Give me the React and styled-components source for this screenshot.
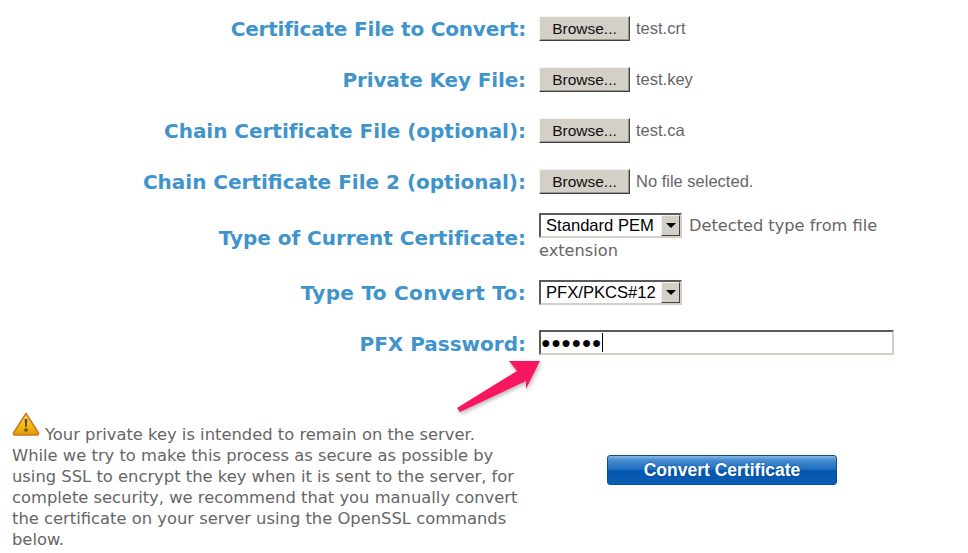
import React from "react";
import styled, { createGlobalStyle } from "styled-components";

const Global = createGlobalStyle`
  html, body { margin: 0; padding: 0; background: #fff; overflow: hidden; }
`;

const Page = styled.div`
  position: relative;
  width: 968px;
  height: 553px;
  overflow: hidden;
  padding-top: 16px;
  box-sizing: border-box;
`;

const Form = styled.div`
  display: flex;
  flex-direction: column;
`;

const Row = styled.div`
  display: grid;
  grid-template-columns: 526px 356px;
  column-gap: 13px;
  align-items: center;
  height: ${(p) => p.$h}px;
  margin-top: ${(p) => p.$mt || 0}px;
  margin-bottom: ${(p) => p.$mb}px;
`;

const Label = styled.div`
  font: bold 20px/${(p) => p.$lh || 25}px "DejaVu Sans", Verdana, sans-serif;
  height: 25px;
  color: #3f94cc;
  text-align: right;
  white-space: nowrap;
  letter-spacing: ${(p) => p.$ls || 0}px;
`;

const FileCell = styled.div`
  display: flex;
  align-items: center;
  gap: 6px;
`;

const BrowseButton = styled.button`
  width: 91px;
  height: 25px;
  padding: 0;
  box-sizing: border-box;
  background: #d4d0c8;
  border: 1px solid;
  border-color: #f4f3ef #404040 #404040 #f4f3ef;
  box-shadow: inset -1px -1px 0 #9a978f;
  font: 15.500px "Liberation Sans", Arial, sans-serif;
  color: #111;
`;

const FileName = styled.span`
  font: 16.500px "Liberation Sans", Arial, sans-serif;
  color: #666;
`;

const SelectBox = styled.span`
  display: inline-flex;
  align-items: center;
  justify-content: space-between;
  vertical-align: top;
  width: 143px;
  height: 25px;
  box-sizing: border-box;
  background: #fff;
  border: 2px solid;
  border-color: #5a5a5a #d4d0c8 #d4d0c8 #5a5a5a;
  padding: 0 0 0 5px;
  margin-top: ${(p) => p.$mt || 0}px;
  font: 16.600px/21px "Liberation Sans", Arial, sans-serif;
  color: #000;
`;

const SelectArrow = styled.span`
  display: flex;
  align-items: center;
  justify-content: center;
  width: 19px;
  height: 21px;
  box-sizing: border-box;
  background: #d4d0c8;
  border: 1px solid;
  border-color: #f4f3ef #404040 #404040 #f4f3ef;
  &::after {
    content: "";
    border-style: solid;
    border-width: 5px 5px 0 5px;
    border-color: #000 transparent transparent transparent;
  }
`;

const Hint = styled.div`
  font: 16.200px/25px "DejaVu Sans", Verdana, sans-serif;
  color: #666;
  align-self: start;
  & > span:last-child { margin-left: 7px; }
`;

const PasswordBox = styled.div`
  width: 355px;
  height: 25px;
  margin-top: -4px;
  box-sizing: border-box;
  background: #fff;
  border: 2px solid;
  border-color: #5a5a5a #d4d0c8 #d4d0c8 #5a5a5a;
  display: flex;
  align-items: center;
`;

const Dots = styled.span`
  font: 16px/19px "Liberation Sans", Arial, sans-serif;
  letter-spacing: 0.5px;
  color: #000;
  border-right: 1px solid #000;
  height: 19px;
  display: inline-block;
`;

const Bottom = styled.div`
  display: grid;
  grid-template-columns: 520px 230px;
  column-gap: 75px;
  padding-left: 12px;
  margin-top: 55px;
  align-items: start;
`;

const Warning = styled.p`
  margin: 0;
  font: 16.350px/21px "DejaVu Sans", Verdana, sans-serif;
  color: #666;
  white-space: nowrap;
`;

const WarnIcon = styled.svg`
  width: 28px;
  height: 24px;
  vertical-align: 4px;
  margin-right: 5px;
`;

const Convert = styled.button`
  width: 230px;
  height: 30px;
  margin-top: 43px;
  padding: 0;
  border: 1px solid #0b4f8f;
  border-radius: 3px;
  background: linear-gradient(#8ab6e2 0%, #4a8ed2 14%, #1c6cbf 48%, #0458ae 52%, #0a5db2 100%);
  color: #fff;
  font: bold 17.500px "Liberation Sans", Arial, sans-serif;
  text-shadow: 0 0 2px #0a4a8c;
`;

const ArrowOverlay = styled.svg`
  position: absolute;
  left: 440px;
  top: 345px;
  width: 120px;
  height: 80px;
  overflow: visible;
`;

const fileRows = [
  ["Certificate File to Convert:", "test.crt", -0.18],
  ["Private Key File:", "test.key", -0.12],
  ["Chain Certificate File (optional):", "test.ca", -0.03],
  ["Chain Certificate File 2 (optional):", "No file selected.", 0],
];

export default function App() {
  return (
    <Page>
      <Global />
      <Form>
        {fileRows.map(([label, file, ls]) => (
          <Row key={label} $h={25} $mb={26}>
            <Label $ls={ls} $lh={27}>{label}</Label>
            <FileCell>
              <BrowseButton>Browse...</BrowseButton>
              <FileName>{file}</FileName>
            </FileCell>
          </Row>
        ))}
        <Row $h={48} $mt={-7} $mb={20}>
          <Label $ls={-0.03}>Type of Current Certificate:</Label>
          <Hint>
            <SelectBox>
              Standard PEM
              <SelectArrow />
            </SelectBox>
            <span>Detected type from file extension</span>
          </Hint>
        </Row>
        <Row $h={25} $mb={26}>
          <Label $ls={0.32}>Type To Convert To:</Label>
          <div>
            <SelectBox $mt={-2}>
              PFX/PKCS#12
              <SelectArrow />
            </SelectBox>
          </div>
        </Row>
        <Row $h={25} $mb={0}>
          <Label>PFX Password:</Label>
          <PasswordBox>
            <Dots>●●●●●●</Dots>
          </PasswordBox>
        </Row>
      </Form>
      <Bottom>
        <Warning>
          <WarnIcon viewBox="0 0 28 24">
            <defs>
              <linearGradient id="warn" x1="0" y1="0" x2="0" y2="1">
                <stop offset="0" stopColor="#f7d96a" />
                <stop offset="0.6" stopColor="#f0b90f" />
                <stop offset="1" stopColor="#e09a05" />
              </linearGradient>
            </defs>
            <path d="M14 1.500 L26.500 21 Q27 23 25 23 H3 Q1 23 1.500 21 Z" fill="url(#warn)" stroke="#c77a1c" strokeWidth="1.500" strokeLinejoin="round" />
            <path d="M12.600 7 H15.400 L14.800 15 H13.200 Z" fill="#6b4a10" />
            <circle cx="14" cy="18" r="1.700" fill="#6b4a10" />
          </WarnIcon>
          Your private key is intended to remain on the server.
          <br />
          While we try to make this process as secure as possible by
          <br />
          using SSL to encrypt the key when it is sent to the server, for
          <br />
          complete security, we recommend that you manually convert
          <br />
          the certificate on your server using the OpenSSL commands
          <br />
          below.
        </Warning>
        <Convert>Convert Certificate</Convert>
      </Bottom>
      <ArrowOverlay viewBox="0 0 120 80">
        <defs>
          <filter id="arrowShadow" x="-20%" y="-20%" width="140%" height="140%">
            <feDropShadow dx="1" dy="2" stdDeviation="2" floodColor="#000" floodOpacity="0.3" />
          </filter>
        </defs>
        <path d="M100 16 L69 16 L77 26 L17 63 L20 67 L86 36 L86 44 Z" fill="#f8185f" filter="url(#arrowShadow)" />
      </ArrowOverlay>
    </Page>
  );
}
